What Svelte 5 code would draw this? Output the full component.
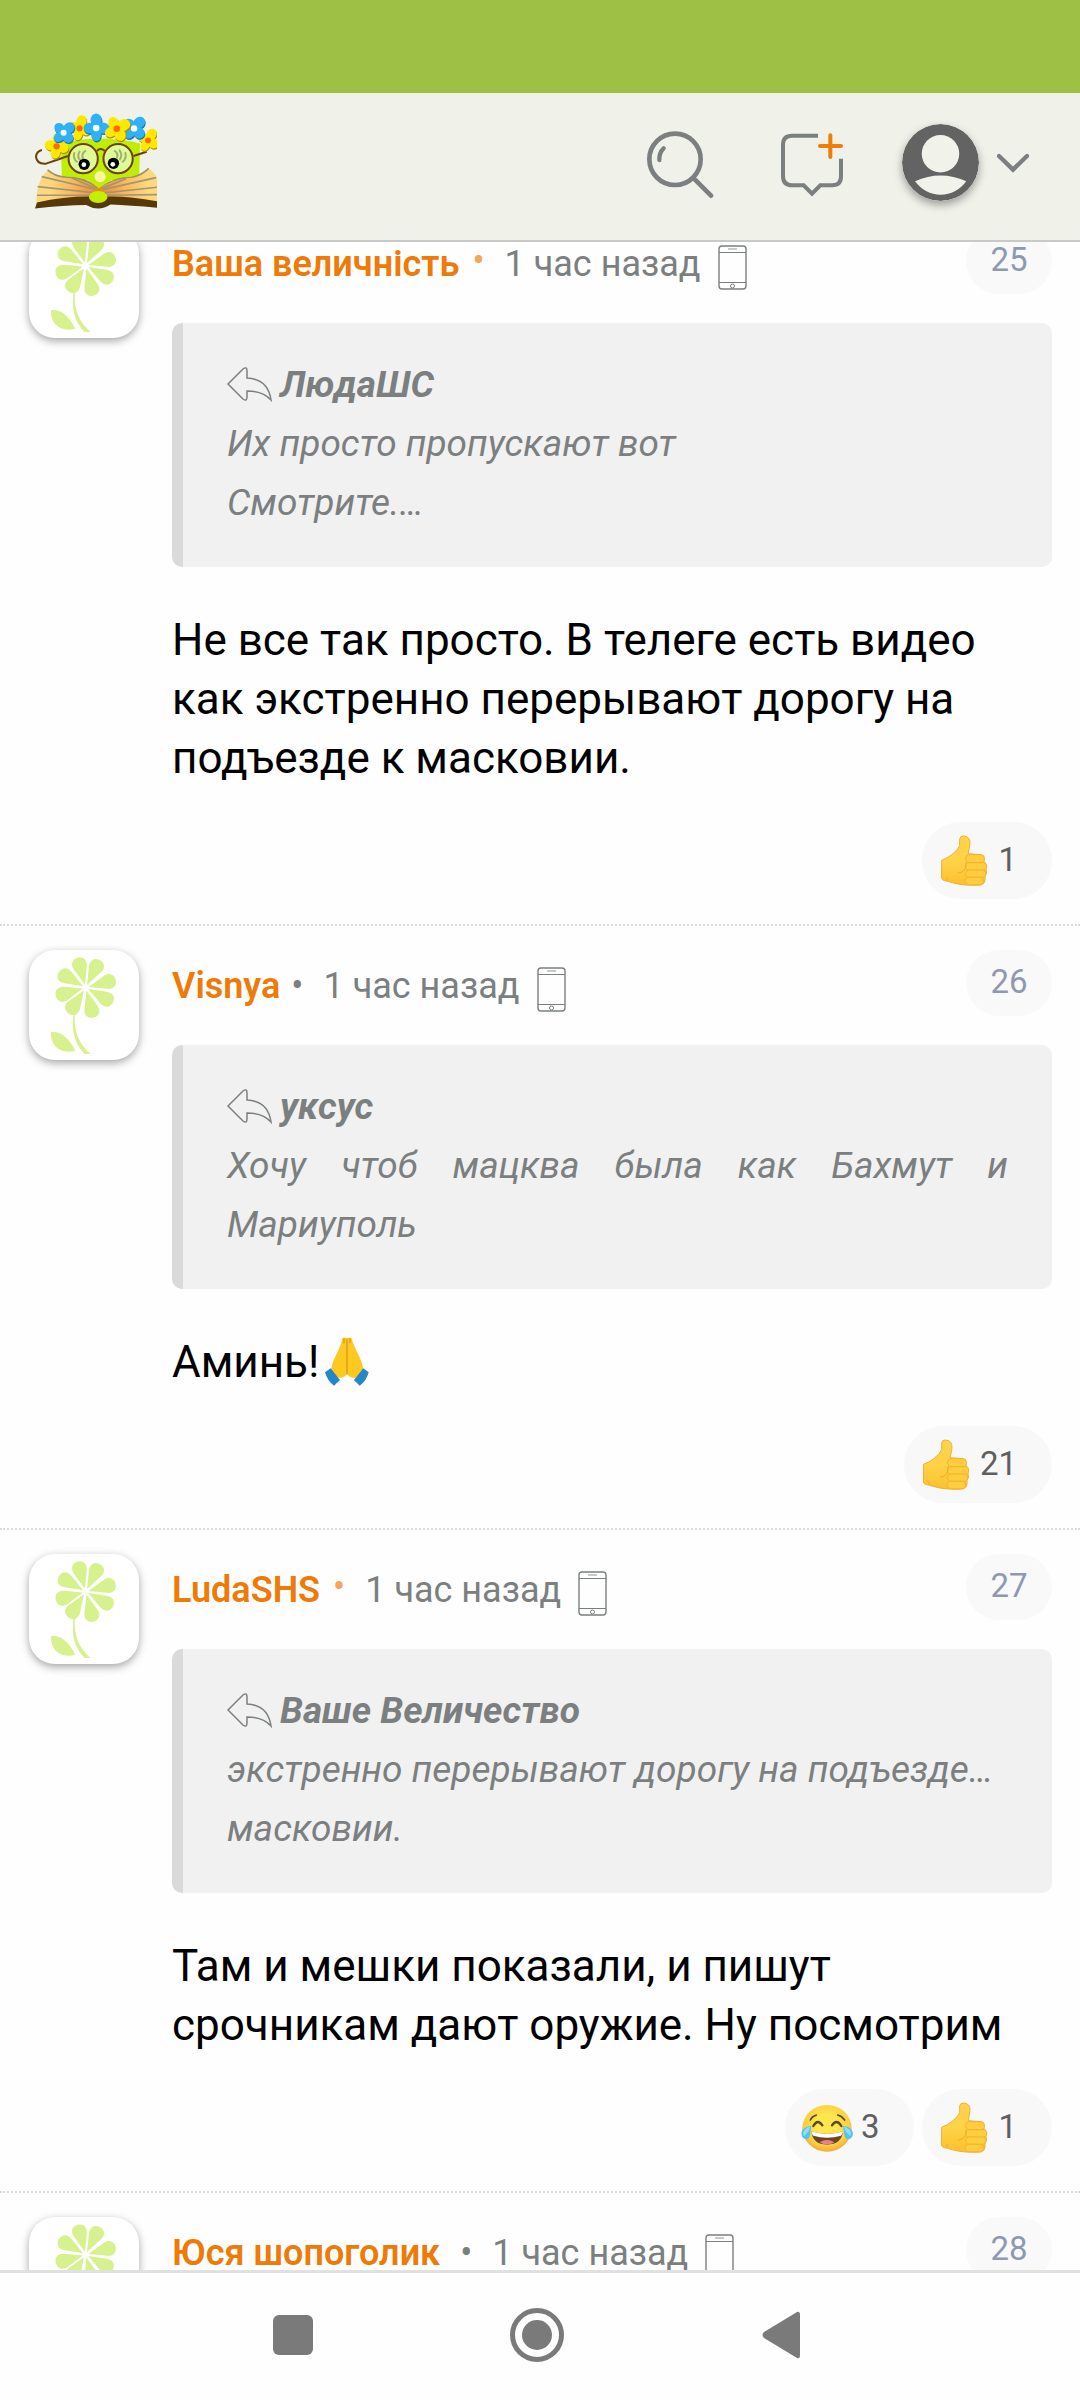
<script lang="ts">
	interface Reaction {
		kind: 'like' | 'laugh';
		count: number;
	}

	interface Post {
		id: number;
		author: string;
		online: boolean;
		time: string;
		quoteAuthor?: string;
		quote?: string[];
		text?: string;
		pray?: boolean;
		reactions: Reaction[];
	}

	const posts: Post[] = [
		{
			id: 25,
			author: 'Ваша величність',
			online: true,
			time: '1 час назад',
			quoteAuthor: 'ЛюдаШС',
			quote: ['Их просто пропускают вот', 'Смотрите.…'],
			text: 'Не все так просто. В телеге есть видео как экстренно перерывают дорогу на подъезде к масковии.',
			reactions: [{ kind: 'like', count: 1 }]
		},
		{
			id: 26,
			author: 'Visnya',
			online: false,
			time: '1 час назад',
			quoteAuthor: 'уксус',
			quote: ['Хочу чтоб мацква была как Бахмут и Мариуполь'],
			text: 'Аминь!',
			pray: true,
			reactions: [{ kind: 'like', count: 21 }]
		},
		{
			id: 27,
			author: 'LudaSHS',
			online: true,
			time: '1 час назад',
			quoteAuthor: 'Ваше Величество',
			quote: ['экстренно перерывают дорогу на подъезде…', 'масковии.'],
			text: 'Там и мешки показали, и пишут срочникам дают оружие. Ну посмотрим',
			reactions: [
				{ kind: 'laugh', count: 3 },
				{ kind: 'like', count: 1 }
			]
		},
		{
			id: 28,
			author: 'Юся шопоголик ',
			online: false,
			time: '1 час назад',
			reactions: []
		}
	];

	const petals = [-15, 27, 75, 119, 165, 213, 254, 300];

	// wreath flowers: x, y, scale, rotation, petal colour, shade, centre
	const wreath = [
		{ x: 169, y: 199, s: 0.95, r: 10, c: '#ffe800', d: '#a89400', m: '#ff6a00' },
		{ x: 444, y: 181, s: 0.88, r: 30, c: '#ffe800', d: '#a89400', m: '#ff6a00' },
		{ x: 238, y: 145, s: 0.92, r: 15, c: '#ffe800', d: '#a89400', m: '#ff6a00' },
		{ x: 190, y: 158, s: 0.92, r: 48, c: '#2fb1f7', d: '#1877ad', m: '#ffffff' },
		{ x: 402, y: 145, s: 0.96, r: 42, c: '#2fb1f7', d: '#1877ad', m: '#ffffff' },
		{ x: 288, y: 144, s: 1, r: 0, c: '#2fb1f7', d: '#1877ad', m: '#ffffff' },
		{ x: 350, y: 146, s: 1, r: 62, c: '#ffe800', d: '#a89400', m: '#ff6a00' }
	];
</script>

{#snippet thumb()}
	<svg class="emoji" viewBox="532 104 156 156" role="img" aria-label="👍">
		<defs>
			<linearGradient id="hand" x1="0" y1="0" x2="0" y2="1">
				<stop offset="0.5" stop-color="#ffd348" />
				<stop offset="1" stop-color="#fcc02b" />
			</linearGradient>
		</defs>
		<path
			fill="url(#hand)"
			stroke="#eeb13a"
			stroke-width="3"
			d="M543 180 Q560 173 572 164 Q593 148 597 136 L597 116 Q599 106 608 107 Q629 108 628 129 Q627 143 622 160 L662 163 Q673 166 670 184 Q680 190 676 207 Q681 219 673 229 Q676 250 660 254 Q610 257 579 248 Q558 242 548 240 Q542 237 542 230 Z"
		/>
		<g fill="#ffcd3e" stroke="#edaa2c" stroke-width="2">
			<rect x="615" y="163" width="56" height="24" rx="10" />
			<rect x="614" y="187" width="64" height="23" rx="10" />
			<rect x="615" y="209" width="60" height="22" rx="10" />
			<rect x="614" y="231" width="54" height="22" rx="9" />
		</g>
		<path d="M616 187 Q619 216 592 218 M559 230 V241" fill="none" stroke="#eeae2f" stroke-width="3" />
	</svg>
{/snippet}

{#snippet laugh()}
	<svg class="emoji" viewBox="118 122 156 156" role="img" aria-label="😂">
		<defs>
			<radialGradient id="face" cx="0.5" cy="0.42" r="0.56">
				<stop offset="0.4" stop-color="#ffe54e" />
				<stop offset="0.8" stop-color="#fdd041" />
				<stop offset="1" stop-color="#f2ae3c" />
			</radialGradient>
		</defs>
		<ellipse cx="196" cy="201" rx="74" ry="70" fill="url(#face)" />
		<path d="M149 210 Q196 226 244 210 Q240 250 196 250 Q153 250 149 210Z" fill="#6b452c" />
		<path d="M149 210 Q196 226 244 210 Q243 219 238 223 Q196 235 155 223 Q150 219 149 210Z" fill="#fff" />
		<path d="M174 243 Q196 229 218 243 Q196 256 174 243Z" fill="#f08080" />
		<g fill="none" stroke="#5b4a25" stroke-linecap="round">
			<path d="M155 194 Q168 171 182 192 M211 192 Q225 171 239 194" stroke-width="7" />
			<path d="M146 176 Q151 165 164 161 M228 161 Q241 164 249 176" stroke-width="5" />
		</g>
		<path d="M149 194 C126 194 115 211 121 225 C128 238 143 236 145 220Z M244 194 C267 194 278 211 272 225 C265 238 250 236 248 220Z" fill="#55c2f5" />
		<path d="M146 196 C129 200 121 212 127 225 L140 211Z M247 196 C264 200 272 212 266 225 L253 211Z" fill="#92dcfb" />
	</svg>
{/snippet}

<div class="screen">
	<div class="status-bar"></div>

	<header class="header">
		<a class="logo" href="/" aria-label="Форум">
			<svg viewBox="104 99 367 288">
				<!-- face -->
				<path d="M182 190 Q300 160 420 190 L417 300 L185 300Z" fill="#c1ec05" />
				<!-- pages -->
				<defs>
					<radialGradient id="pages" gradientUnits="userSpaceOnUse" cx="296" cy="328" r="150">
						<stop offset="0" stop-color="#f58220" />
						<stop offset="0.5" stop-color="#fbb45a" />
						<stop offset="1" stop-color="#fcd980" />
					</radialGradient>
				</defs>
				<path d="M144 270 Q163 288 190 291 Q248 287 297 325 Q347 292 398 292 Q424 285 446 265 Q463 277 471 292 L471 372 L108 372 Q107 300 144 270Z" fill="url(#pages)" />
				<path d="M142 270 Q163 289 190 291 Q248 290 295 324 Q345 292 398 291 Q426 285 446 265" fill="none" stroke="#a09163" stroke-width="5" />
				<path d="M190 291 Q230 287 265 302 L296 325 L347 292 L398 291 L345 280 H240Z" fill="#c1ec05" />
				<path d="M124 290 L285 328 M112 320 L280 338 M110 346 L275 346 M468 293 L308 329 M471 322 L313 339 M471 344 L318 346 M215 294 L285 325 M378 296 L306 326" stroke="#a29774" stroke-width="5" fill="none" />
				<path d="M110 368 Q190 350 265 350 L327 350 Q390 349 471 364 L471 384 Q390 376 331 374 Q295 397 258 375 Q190 375 104 386Z" fill="#573908" />
				<ellipse cx="294" cy="351" rx="28" ry="18" fill="#c5ef00" />
				<circle cx="300" cy="290" r="17" fill="#fdf5a0" />
				<!-- glasses -->
				<g stroke="#6b4205" stroke-width="6" fill="none">
					<path d="M203 228 Q170 240 137 251 Q109 253 107 230 Q109 213 125 210 M400 228 L440 215 M290 213 Q301 201 314 213" />
					<circle cx="249" cy="236" r="44" fill="#e1fa98" />
					<circle cx="354" cy="236" r="44" fill="#e1fa98" />
				</g>
				<g stroke="#9eb36d" stroke-width="6" fill="none">
					<path d="M223 216 Q216 234 232 247 M239 213 Q228 231 241 241 M257 212 Q241 222 249 237 M375 216 Q382 234 366 247 M357 209 Q370 227 358 240 M342 212 Q357 220 350 235" />
				</g>
				<circle cx="252" cy="253" r="17" fill="#000" />
				<circle cx="251" cy="254" r="7" fill="#fff" />
				<circle cx="340" cy="250" r="17" fill="#000" />
				<circle cx="338" cy="253" r="7" fill="#fff" />
				<!-- wreath -->
				{#each wreath as f}
					<g transform="translate({f.x} {f.y}) scale({f.s})">
						{#each [f.d, f.c] as colour, layer}
							<g transform="translate({layer ? 0 : 2} {layer ? 0 : 4}) rotate({f.r})" fill={colour}>
								<ellipse cy="-24" rx="17" ry="20" />
								<ellipse cy="20" rx="15" ry="19" />
								<ellipse cx="-20" rx="18" ry="16" />
								<ellipse cx="21" rx="18" ry="17" />
							</g>
						{/each}
						<circle r="10" fill={f.m} />
					</g>
				{/each}
			</svg>
		</a>

		<div class="tools">
			<button class="tool" aria-label="Поиск">
				<svg width="76" height="76" viewBox="114 133 228 228" fill="none" stroke="#7b7f80" stroke-linecap="round">
					<circle cx="225" cy="236" r="77" stroke-width="14" />
					<path d="M282 294 L333 345" stroke-width="14" />
					<path d="M178 238 Q177 217 191 203" stroke-width="13" />
				</svg>
			</button>
			<button class="tool" aria-label="Новая тема">
				<svg width="76" height="76" viewBox="510 133 228 228" fill="none" stroke-width="12">
					<path d="M654 165 H576 Q549 165 549 192 V286 Q549 314 576 314 H611 L636 339 L661 314 H697 Q723 314 723 287 V234" stroke="#7b7f80" />
					<path d="M691 164 V229 M660 196 H723" stroke="#f07c0a" stroke-linecap="round" />
				</svg>
			</button>
			<button class="tool account" aria-label="Профиль">
				<svg class="account-pic" width="77" height="77" viewBox="906 132 230 230">
					<circle cx="1021" cy="247" r="115" fill="#636363" />
					<circle cx="1021" cy="221" r="56" fill="#f1f2ea" />
					<path d="M945 303 Q1021 269 1098 303 Q1068 343 1021 343 Q975 343 945 303Z" fill="#f1f2ea" />
				</svg>
				<svg width="32" height="20" viewBox="1190 217 96 60" fill="none" stroke="#7b7f80" stroke-width="13" stroke-linecap="round">
					<path d="M1196 226 L1238 267 L1280 226" />
				</svg>
			</button>
		</div>
	</header>

	<main class="feed">
		<div class="posts">
			{#each posts as post (post.id)}
				<article class="post">
					<div class="avatar">
						<svg viewBox="87 90 330 330" fill="#d8f18f">
							<g transform="translate(257 203)">
								{#each petals as angle}
									<path transform="rotate({angle})" d="M0 -9 L-20 -61 C-28 -84 -13 -93 0 -93 C13 -93 28 -84 20 -61Z" />
								{/each}
							</g>
							<path d="M221 281 C214 330 222 370 254 402 L272 402 C238 372 220 335 225 281Z" />
							<path d="M153 337 C150 378 182 404 226 392 C207 354 180 332 153 337Z" />
						</svg>
					</div>

					<div class="content">
						<div class="post-head">
							<div class="meta">
								<a class="author" href="#user-{post.id}">{post.author}</a>
								<span class="dot" class:online={post.online}>•</span>
								<span class="time">{post.time}</span>
								<svg class="phone" width="30" height="46" viewBox="0 0 30 46" fill="none" stroke="#7b7f80">
									<rect x="1" y="1" width="27" height="43" rx="3" stroke-width="1.4" />
									<path d="M1 7.5 H28 M1 37.5 H28" stroke-width="1.2" />
									<path d="M10 4 H19" stroke="#b5b7b8" stroke-width="1.5" />
									<circle cx="14.5" cy="41" r="2" />
								</svg>
							</div>
							<a class="number" href="#post-{post.id}">{post.id}</a>
						</div>

						{#if post.quote}
							<blockquote class="quote">
								<div class="quote-author">
									<svg width="46" height="35" viewBox="0 0 46 35" fill="none" stroke="#7b7f80" stroke-width="1.5">
										<path d="M1 17 L16 2 Q20 -1 20 4 V11 Q41 12 44 33 Q36 24 20 24 V30 Q20 35 16 32Z" />
									</svg>
									<strong>{post.quoteAuthor}</strong>
								</div>
								{#each post.quote as line}
									<div>{line}</div>
								{/each}
							</blockquote>
						{/if}

						{#if post.text}
							<p class="text">
								{post.text}{#if post.pray}<svg class="pray" viewBox="488 50 144 150" role="img" aria-label="🙏">
										<path d="M547 55 H573 Q579 76 597 112 Q607 132 609 150 L594 173 Q574 181 560 165 Q546 181 525 172 L512 150 Q515 130 527 107 Q543 76 547 55Z" fill="#fdc921" />
										<path d="M560 60 V165 M551 57 V72 M569 57 V72" stroke="#e09a18" stroke-width="4" fill="none" />
										<path d="M511 147 L539 182 L521 199 Q502 186 494 159Z M609 147 L581 182 L598 199 Q618 186 625 159Z" fill="#2387c9" />
									</svg>{/if}
							</p>
							<div class="reactions">
								{#each post.reactions as reaction}
									<button class="reaction">
										{#if reaction.kind === 'like'}
											{@render thumb()}
										{:else}
											{@render laugh()}
										{/if}
										<span>{reaction.count}</span>
									</button>
								{/each}
							</div>
						{/if}
					</div>
				</article>
			{/each}
		</div>
	</main>

	<nav class="nav-bar">
		<button class="nav-btn" aria-label="Недавние">
			<svg width="54" height="54" fill="#7a7a7a"><rect x="7" y="7" width="40" height="40" rx="6" /></svg>
		</button>
		<button class="nav-btn" aria-label="Домой">
			<svg width="54" height="54">
				<circle cx="27" cy="27" r="24.5" fill="none" stroke="#7a7a7a" stroke-width="5" />
				<circle cx="27" cy="27" r="15" fill="#7a7a7a" />
			</svg>
		</button>
		<button class="nav-btn" aria-label="Назад">
			<svg width="54" height="54" fill="#7a7a7a">
				<path d="M43 4 Q46 3 46 7 V47 Q46 51 43 50 L10 30 Q7 27 10 24Z" />
			</svg>
		</button>
	</nav>
</div>

<style>
	:global(body) {
		margin: 0;
		background: #fefefe;
	}

	.screen {
		display: flex;
		flex-direction: column;
		height: 100vh;
		font-family: Roboto, 'Noto Sans', sans-serif;
		color: #000;
	}

	button {
		border: 0;
		padding: 0;
		background: none;
		font: inherit;
		cursor: pointer;
	}

	a {
		text-decoration: none;
	}

	svg {
		display: block;
		flex-shrink: 0;
	}

	.status-bar {
		height: 93px;
		flex-shrink: 0;
		background: #9dc045;
	}

	.header {
		display: flex;
		align-items: center;
		justify-content: space-between;
		flex-shrink: 0;
		box-sizing: border-box;
		height: 149px;
		padding: 0 51px 8px 35px;
		background: #f0f1e9;
		border-bottom: 2px solid #c9cac8;
	}

	.logo {
		padding-bottom: 4px;
	}

	.logo svg {
		width: 122px;
		height: 96px;
	}

	.tools {
		display: flex;
		align-items: center;
		gap: 56px;
	}

	.account {
		display: flex;
		align-items: center;
		gap: 18px;
	}

	.account-pic {
		border-radius: 50%;
		box-shadow: 0 4px 8px rgba(0, 0, 0, 0.35);
	}

	.feed {
		flex: 1;
		min-height: 0;
		overflow: hidden;
	}

	/* the feed is scrolled a little past its start */
	.posts {
		margin-top: -38px;
	}

	.post {
		display: flex;
		gap: 33px;
		padding: 24px 28px 25px 29px;
		border-bottom: 2px dotted #dcdcdc;
	}

	.avatar {
		width: 110px;
		height: 110px;
		flex-shrink: 0;
		border-radius: 26px;
		background: #fff;
		box-shadow: 0 3px 8px rgba(0, 0, 0, 0.35);
	}

	.content {
		flex: 1;
		min-width: 0;
	}

	.post-head {
		display: flex;
		align-items: center;
		justify-content: space-between;
		height: 66px;
		margin-bottom: 29px;
	}

	.meta {
		display: flex;
		align-items: center;
		padding-top: 6px;
		font-size: 36px;
		line-height: 40px;
		color: #7b7f80;
	}

	.author {
		color: #ee7a08;
		font-weight: 600;
		white-space: pre;
	}

	.dot {
		margin: 0 20px 0 11px;
	}

	.dot.online {
		margin-left: 13px;
		padding-bottom: 6px;
		color: #f5a45a;
	}

	.phone {
		margin: 8px 0 0 17px;
	}

	.number {
		width: 86px;
		border-radius: 33px;
		background: #f9f9f9;
		color: #8e99b1;
		font-size: 33px;
		line-height: 64px;
		padding-bottom: 2px;
		text-align: center;
	}

	.quote {
		margin: 0;
		padding: 32px 44px 35px;
		border-left: 11px solid #dadada;
		border-radius: 10px;
		background: #f1f1f1;
		color: #7b7f80;
		font-size: 37px;
		font-style: italic;
		line-height: 59px;
		text-align: justify;
	}

	.quote-author {
		display: flex;
		align-items: center;
		gap: 7px;
	}

	.quote-author strong {
		font-weight: 700;
	}

	.text {
		margin: 44px 0 34px;
		font-size: 44px;
		line-height: 59px;
	}

	.pray {
		display: inline-block;
		width: 48px;
		height: 50px;
		margin-left: 4px;
		vertical-align: -9px;
	}

	.reactions {
		display: flex;
		justify-content: flex-end;
		gap: 8px;
	}

	.reaction {
		display: flex;
		align-items: center;
		gap: 8px;
		height: 77px;
		padding: 0 35px 0 16px;
		border-radius: 39px;
		background: #f8f8f8;
		color: #5f5f5f;
		font-size: 33px;
	}

	.reaction span {
		padding-bottom: 2px;
	}

	.emoji {
		width: 52px;
		height: 52px;
	}

	.nav-bar {
		display: flex;
		align-items: center;
		justify-content: center;
		gap: 190px;
		flex-shrink: 0;
		box-sizing: border-box;
		height: 130px;
		padding: 0 7px 3px 0;
		border-top: 3px solid #e0e2e0;
		background: #fefefe;
	}
</style>
